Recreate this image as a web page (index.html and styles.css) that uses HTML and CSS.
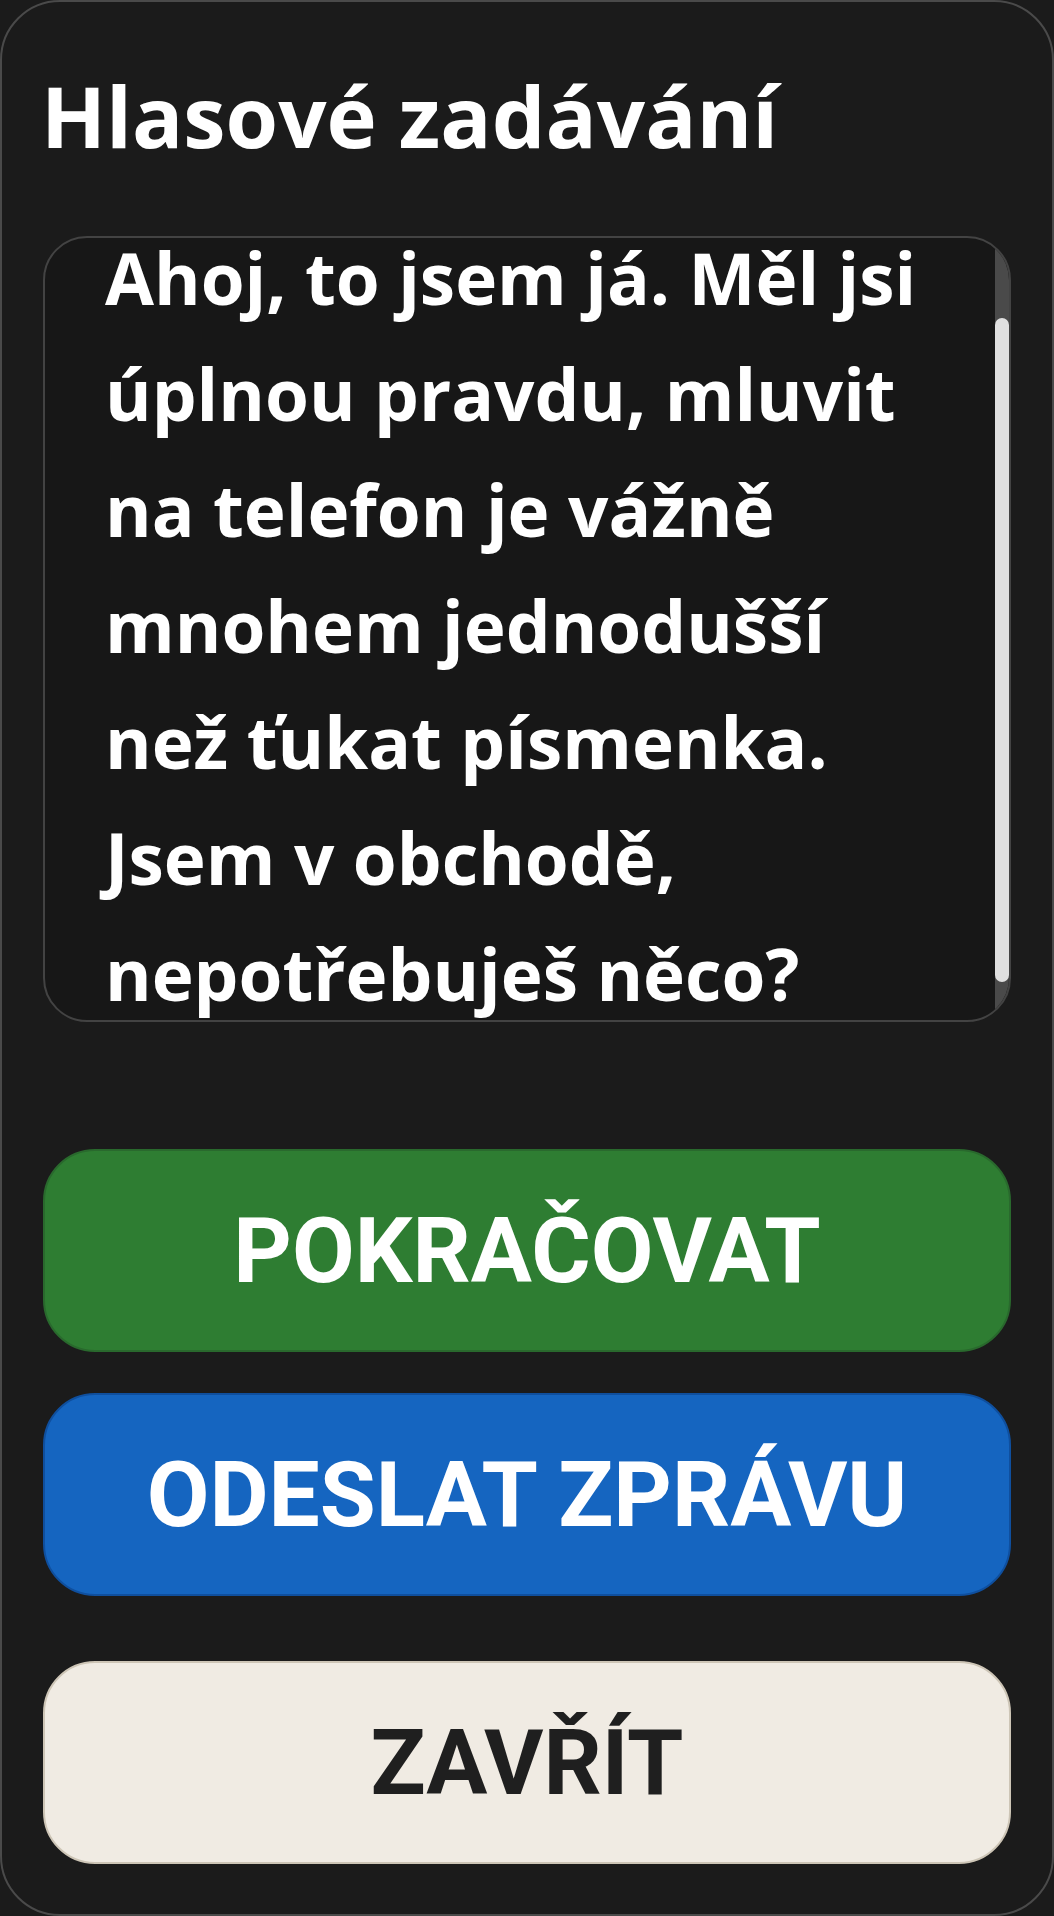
FILE: index.html
```html
<!DOCTYPE html>
<html lang="cs">
<head>
<meta charset="utf-8">
<title>Hlasové zadávání</title>
<link rel="stylesheet" href="styles.css">
</head>
<body>
<div class="frame">
  <h1 class="title">Hlasové zadávání</h1>
  <div class="transcript">
    <div class="transcript-view" id="transcript">
      <div class="transcript-text">Ahoj, to jsem já. Měl jsi úplnou pravdu, mluvit na telefon je vážně mnohem jednodušší než ťukat písmenka. Jsem v obchodě, nepotřebuješ něco?</div>
    </div>
    <div class="scrollbar">
      <div class="scrollbar-thumb"></div>
    </div>
  </div>
  <div class="actions">
    <button class="btn btn-continue">POKRAČOVAT</button>
    <button class="btn btn-send">ODESLAT ZPRÁVU</button>
    <button class="btn btn-close">ZAVŘÍT</button>
  </div>
</div>
<script src="script.js"></script>
</body>
</html>
```
FILE: styles.css
```css
html, body {
  margin: 0;
  padding: 0;
  background: #1b1b1b;
}

.frame {
  box-sizing: border-box;
  width: 1054px;
  height: 1916px;
  border: 2px solid #4a4a4a;
  border-radius: 60px;
  background: #1b1b1b;
  padding: 62px 41px 0 41px;
  display: flex;
  flex-direction: column;
}

.title {
  margin: 0 0 0 -2px;
  font-family: "Open Sans", "Noto Sans", sans-serif;
  font-weight: 700;
  font-size: 85px;
  line-height: 102px;
  color: #ffffff;
}

.transcript {
  box-sizing: border-box;
  margin-top: 70px;
  height: 786px;
  border: 2px solid #434343;
  border-radius: 44px;
  background: #171717;
  overflow: hidden;
  display: flex;
}

.transcript-view {
  flex: 1;
  min-width: 0;
  overflow: hidden;
}

.transcript-text {
  padding: 76px 61px 35px 60px;
  font-family: "Open Sans", "Noto Sans", sans-serif;
  font-weight: 700;
  font-size: 71px;
  line-height: 116px;
  color: #ffffff;
}

.scrollbar {
  width: 14px;
  flex: none;
  background: #4a4a4a;
}

.scrollbar-thumb {
  margin-top: 80px;
  height: 664px;
  border-radius: 7px;
  background: #e0e0e0;
}

.actions {
  display: flex;
  flex-direction: column;
  margin-top: 127px;
}

.btn {
  box-sizing: border-box;
  height: 203px;
  width: 100%;
  border-radius: 52px;
  border: 2px solid;
  font-family: Roboto, "Liberation Sans", sans-serif;
  font-weight: 700;
  font-size: 91px;
  display: flex;
  align-items: center;
  justify-content: center;
  padding: 0;
}

.btn-continue {
  background: #2e7d32;
  border-color: #29692d;
  color: #ffffff;
}

.btn-send {
  margin-top: 41px;
  background: #1565c0;
  border-color: #0f4f9e;
  color: #ffffff;
}

.btn-close {
  margin-top: 65px;
  background: #f0ebe3;
  border-color: #cdc5b6;
  color: #1f1f1f;
}
```
FILE: script.js
```js
document.getElementById('transcript').scrollTop = 94;
```
